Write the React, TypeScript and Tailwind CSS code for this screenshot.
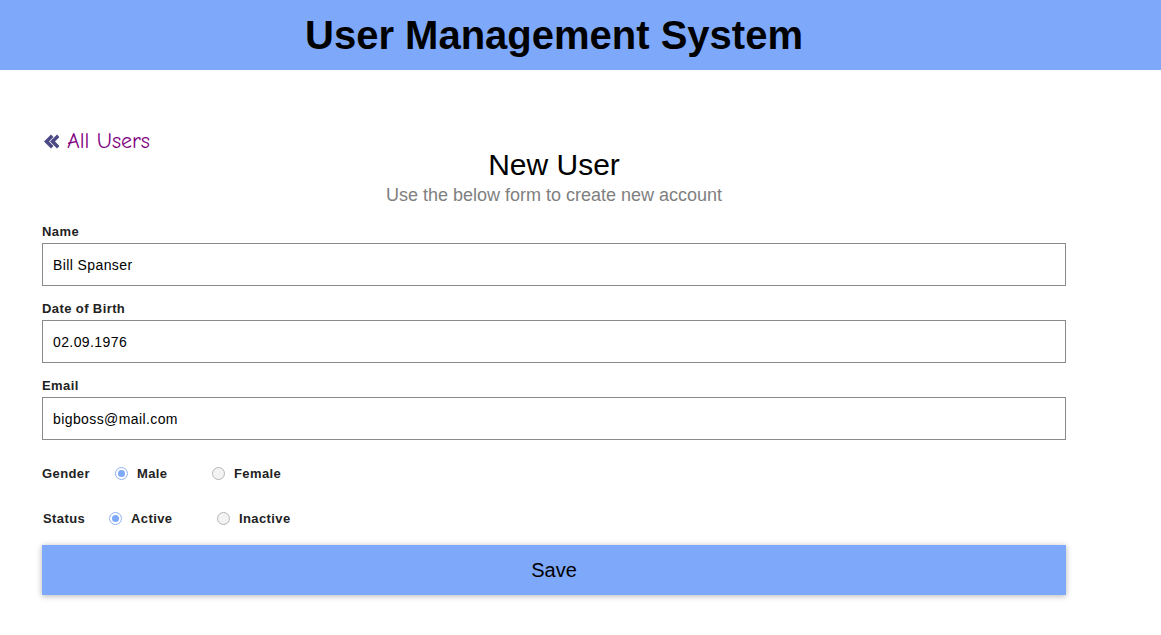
import React from "react";

function Radio({ checked }: { checked?: boolean }) {
  return checked ? (
    <span className="flex h-[13px] w-[13px] shrink-0 items-center justify-center rounded-full border border-[#8fb2f0] bg-white">
      <span className="h-[7px] w-[7px] rounded-full bg-[#7ea9fb]" />
    </span>
  ) : (
    <span className="block h-[13px] w-[13px] shrink-0 rounded-full border border-[#b5b5b5] bg-[#f3f3f3]" />
  );
}

export default function App() {
  const font = { fontFamily: '"Liberation Sans", Arial, sans-serif' };
  return (
    <div className="min-h-[635px] bg-white text-black" style={font}>
      <header className="h-[70px] bg-[#7ea9fb]">
        <div className="ml-[42px] flex h-full w-[1024px] items-center justify-center">
          <h1 className="text-[40px] font-bold leading-none">User Management System</h1>
        </div>
      </header>
      <main className="ml-[42px] w-[1024px]">
        <div className="mt-[57px] flex h-[28px] items-center">
          <svg width="16" height="15" viewBox="0 0 16 15" className="ml-[1px] mr-[8px] text-[#4b4a86]">
            <path d="M6.5 0.5 L9 3 L4.5 7.5 L9 12 L6.5 14.5 L-0.5 7.5 Z" fill="currentColor" transform="translate(1.5 0)" />
            <path d="M6.5 0.5 L9 3 L4.5 7.5 L9 12 L6.5 14.5 L-0.5 7.5 Z" fill="currentColor" transform="translate(7.5 0)" />
          </svg>
          <span
            className="text-[22px] leading-[28px] text-[#800080]"
            style={{ fontFamily: '"Comic Sans MS", "Comic Neue", "DejaVu Sans", sans-serif' }}
          >
            All Users
          </span>
        </div>
        <div className="mt-[-7px] text-center">
          <h2 className="text-[30px] leading-[34px]">New User</h2>
          <p className="mt-[2px] text-[18px] leading-[22px] text-[#808080]">Use the below form to create new account</p>
        </div>
        <form className="mt-[18px]">
          {[
            ["Name", "Bill Spanser"],
            ["Date of Birth", "02.09.1976"],
            ["Email", "bigboss@mail.com"],
          ].map(([label, value], i) => (
            <div key={label} className={i === 0 ? "" : "mt-[15px]"}>
              <label className="block text-[13px] font-bold leading-[15px] tracking-[0.4px] text-[#222]">{label}</label>
              <input
                readOnly
                value={value}
                className="mt-[4px] block h-[43px] w-full border border-[#8a8a8a] px-[10px] text-[14px] tracking-[0.4px] text-black outline-none"
                style={font}
              />
            </div>
          ))}
          <div className="mt-[26px] flex h-[15px] items-center text-[13px] font-bold tracking-[0.4px] text-[#222]">
            <span className="w-[73px]">Gender</span>
            <label className="flex w-[97px] items-center gap-[9px]">
              <Radio checked />
              Male
            </label>
            <label className="flex items-center gap-[9px]">
              <Radio />
              Female
            </label>
          </div>
          <div className="mt-[30px] flex h-[15px] items-center text-[13px] font-bold tracking-[0.4px] text-[#222]">
            <span className="ml-[1px] w-[66px]">Status</span>
            <label className="flex w-[108px] items-center gap-[9px]">
              <Radio checked />
              Active
            </label>
            <label className="flex items-center gap-[9px]">
              <Radio />
              Inactive
            </label>
          </div>
          <button
            type="button"
            className="mt-[19px] block h-[50px] w-full bg-[#7ea9fb] text-[20px] text-black shadow-[0_1px_6px_rgba(0,0,0,0.3)]"
            style={font}
          >
            Save
          </button>
        </form>
      </main>
    </div>
  );
}
